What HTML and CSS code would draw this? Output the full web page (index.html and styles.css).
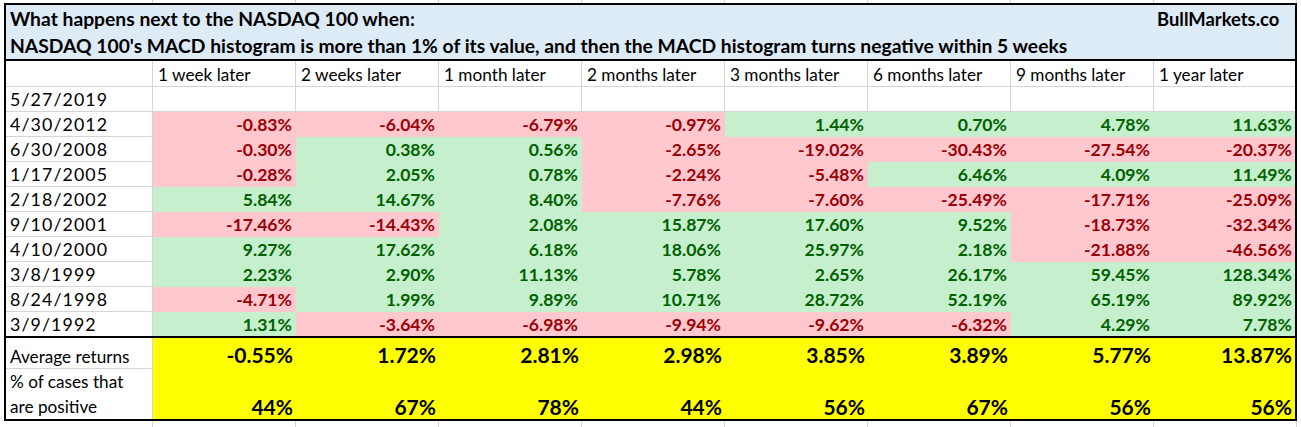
FILE: index.html
```html
<!DOCTYPE html>
<html lang="en">
<head>
<meta charset="utf-8">
<title>NASDAQ 100 MACD study</title>
<link rel="stylesheet" href="styles.css">
</head>
<body>
<div class="tbl">
  <div class="title">
    <div class="title-row"><span>What happens next to the NASDAQ 100 when:</span><span class="brand">BullMarkets.co</span></div>
    <div class="title-row">NASDAQ 100's MACD histogram is more than 1% of its value, and then the MACD histogram turns negative within 5 weeks</div>
  </div>
  <div class="grid">
    <div class="c hd"></div><div class="c hd">1 week later</div><div class="c hd">2 weeks later</div><div class="c hd">1 month later</div><div class="c hd">2 months later</div><div class="c hd">3 months later</div><div class="c hd">6 months later</div><div class="c hd">9 months later</div><div class="c hd">1 year later</div>

    <div class="c d">5/27/2019</div><div class="c"></div><div class="c"></div><div class="c"></div><div class="c"></div><div class="c"></div><div class="c"></div><div class="c"></div><div class="c"></div>

    <div class="c d">4/30/2012</div><div class="c n">-0.83%</div><div class="c n">-6.04%</div><div class="c n">-6.79%</div><div class="c n">-0.97%</div><div class="c p">1.44%</div><div class="c p">0.70%</div><div class="c p">4.78%</div><div class="c p">11.63%</div>

    <div class="c d">6/30/2008</div><div class="c n">-0.30%</div><div class="c p">0.38%</div><div class="c p">0.56%</div><div class="c n">-2.65%</div><div class="c n">-19.02%</div><div class="c n">-30.43%</div><div class="c n">-27.54%</div><div class="c n">-20.37%</div>

    <div class="c d">1/17/2005</div><div class="c n">-0.28%</div><div class="c p">2.05%</div><div class="c p">0.78%</div><div class="c n">-2.24%</div><div class="c n">-5.48%</div><div class="c p">6.46%</div><div class="c p">4.09%</div><div class="c p">11.49%</div>

    <div class="c d">2/18/2002</div><div class="c p">5.84%</div><div class="c p">14.67%</div><div class="c p">8.40%</div><div class="c n">-7.76%</div><div class="c n">-7.60%</div><div class="c n">-25.49%</div><div class="c n">-17.71%</div><div class="c n">-25.09%</div>

    <div class="c d">9/10/2001</div><div class="c n">-17.46%</div><div class="c n">-14.43%</div><div class="c p">2.08%</div><div class="c p">15.87%</div><div class="c p">17.60%</div><div class="c p">9.52%</div><div class="c n">-18.73%</div><div class="c n">-32.34%</div>

    <div class="c d">4/10/2000</div><div class="c p">9.27%</div><div class="c p">17.62%</div><div class="c p">6.18%</div><div class="c p">18.06%</div><div class="c p">25.97%</div><div class="c p">2.18%</div><div class="c n">-21.88%</div><div class="c n">-46.56%</div>

    <div class="c d">3/8/1999</div><div class="c p">2.23%</div><div class="c p">2.90%</div><div class="c p">11.13%</div><div class="c p">5.78%</div><div class="c p">2.65%</div><div class="c p">26.17%</div><div class="c p">59.45%</div><div class="c p">128.34%</div>

    <div class="c d">8/24/1998</div><div class="c n">-4.71%</div><div class="c p">1.99%</div><div class="c p">9.89%</div><div class="c p">10.71%</div><div class="c p">28.72%</div><div class="c p">52.19%</div><div class="c p">65.19%</div><div class="c p">89.92%</div>

    <div class="c d lr">3/9/1992</div><div class="c lr p">1.31%</div><div class="c lr n">-3.64%</div><div class="c lr n">-6.98%</div><div class="c lr n">-9.94%</div><div class="c lr n">-9.62%</div><div class="c lr n">-6.32%</div><div class="c lr p">4.29%</div><div class="c lr p">7.78%</div>
  </div>
  <div class="grid summary">
    <div class="s1 lab">Average returns</div><div class="s1 y">-0.55%</div><div class="s1 y">1.72%</div><div class="s1 y">2.81%</div><div class="s1 y">2.98%</div><div class="s1 y">3.85%</div><div class="s1 y">3.89%</div><div class="s1 y">5.77%</div><div class="s1 y">13.87%</div>

    <div class="s2 lab">% of cases that are positive</div><div class="s2 y">44%</div><div class="s2 y">67%</div><div class="s2 y">78%</div><div class="s2 y">44%</div><div class="s2 y">56%</div><div class="s2 y">67%</div><div class="s2 y">56%</div><div class="s2 y">56%</div>
  </div>
</div>
</body>
</html>
```
FILE: styles.css
```css
html, body {
  margin: 0;
}
body {
  padding: 3px 0 0 4px;
  height: 427px;
  box-sizing: border-box;
  overflow: hidden;
  font-family: Lato, "Liberation Sans", sans-serif;
  font-variant-numeric: tabular-nums;
  color: #000;
  background-color: #fff;
  background-image: repeating-linear-gradient(90deg, #d4d4d4 0 1px, transparent 1px 143px);
  background-size: 1150px 100%;
  background-position: 152px 0;
  background-repeat: no-repeat;
}
.tbl {
  width: 1289px;
  border: 2px solid #000;
  background: #fff;
}
.title {
  background: #ddebf7;
  height: 54px;
  border-bottom: 2px solid #000;
  font-weight: 700;
  font-size: 19.3px;
  white-space: nowrap;
}
.title-row {
  display: grid;
  grid-template-columns: 1fr 141px;
  height: 27px;
  line-height: 28px;
  padding-left: 4px;
}
.brand {
  padding-left: 3px;
  font-size: 18.4px;
}
.grid {
  display: grid;
  grid-template-columns: 147px repeat(7, 143px) 141px;
}
.c {
  height: 25px;
  box-sizing: border-box;
  border-right: 1px solid #d4d4d4;
  border-bottom: 1px solid #d4d4d4;
  padding: 0 3px 0 4px;
  line-height: 25px;
  font-size: 17.2px;
  white-space: nowrap;
  overflow: hidden;
}
.c:nth-child(9n) {
  border-right: 0;
}
.d {
  font-size: 17.8px;
  letter-spacing: 1.1px;
}
.hd {
  height: 26px;
  line-height: 27px;
  padding-left: 5px;
}
.lr {
  height: 24px;
  border-bottom: 0;
}
.n, .p {
  text-align: right;
  font-weight: 700;
  font-size: 17.6px;
}
.n {
  background: #ffc7ce;
  border-color: #ffc7ce;
  color: #9c0006;
}
.p {
  background: #c6efce;
  border-color: #c6efce;
  color: #006100;
}
.summary {
  border-top: 2px solid #000;
  grid-template-rows: 31px 50px;
}
.s1, .s2 {
  box-sizing: border-box;
  padding: 0 3px 0 4px;
  white-space: nowrap;
}
.lab {
  font-size: 17.2px;
  border-right: 1px solid #d4d4d4;
}
.s1.lab {
  border-bottom: 1px solid #d4d4d4;
  padding-top: 4px;
  line-height: 30px;
}
.s2.lab {
  white-space: normal;
  line-height: 25px;
  padding-right: 10px;
}
.y {
  background: #ff0;
  text-align: right;
  font-weight: 700;
  font-size: 21px;
}
.s1.y {
  padding-top: 2px;
  line-height: 30px;
}
.s2.y {
  line-height: 25px;
  padding-top: 25px;
}
```
